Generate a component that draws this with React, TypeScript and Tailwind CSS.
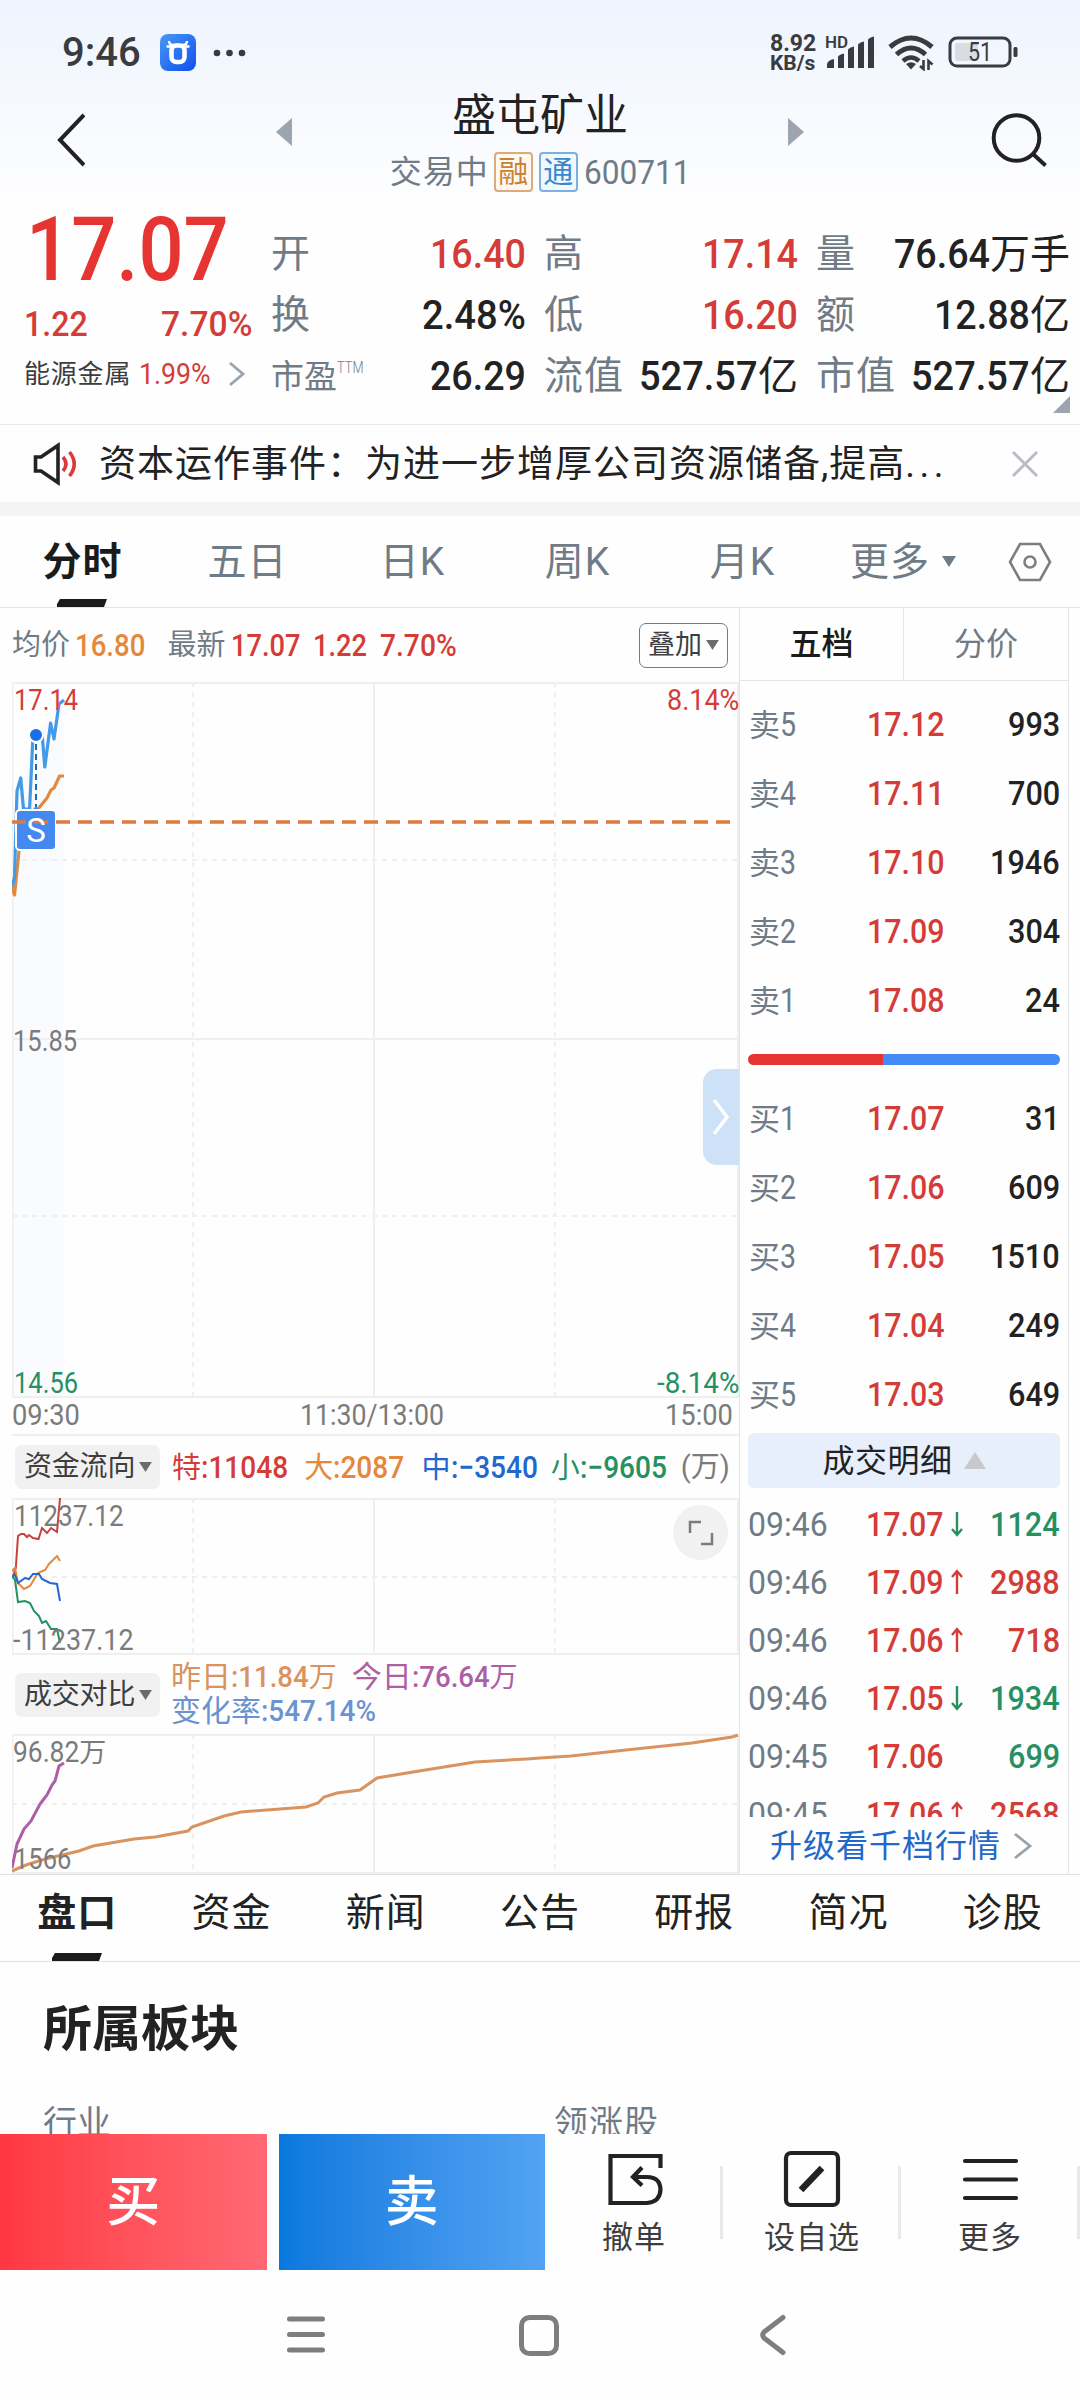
import type { ReactNode } from "react";

const RED = "text-[#d43c38]";
const GREEN = "text-[#259062]";
const SLATE = "text-[#6f7b86]";

const GLYPH_WIDTH: Record<string, number> = { ".": 0.275, ":": 0.25, "%": 0.73, "-": 0.3, "−": 0.56, "/": 0.39, T: 0.6, M: 0.87 };

/* Condensed numerals: squeezes the glyphs and gives back the space they no longer fill. */
function Num({ children, s = 0.9, className = "" }: { children: string; s?: number; className?: string }) {
  const natural = [...children].reduce((sum, c) => sum + (GLYPH_WIDTH[c] ?? 0.563), 0);
  return (
    <span
      className={`inline-block origin-left whitespace-nowrap tracking-normal ${className}`}
      style={{ transform: `scaleX(${s})`, marginRight: `${-natural * (1 - s)}em` }}
    >
      {children}
    </span>
  );
}

function Down({ className = "" }: { className?: string }) {
  return (
    <svg viewBox="0 0 14 11" className={className}>
      <path d="M0 0H14L7 11Z" fill="currentColor" />
    </svg>
  );
}

function StatusBar() {
  return (
    <div className="flex h-[80px] items-start pt-[32px] text-[#3a3b3e]">
      <div className="ml-[62px] mt-[1px] w-[98px] text-[40px] font-medium leading-[40px]">9:46</div>
      <svg width="36" height="37" viewBox="0 0 36 37" className="mt-[2px]">
        <defs>
          <linearGradient id="app" x1="0" y1="0" x2="1" y2="1">
            <stop offset="0" stopColor="#4a97f8" />
            <stop offset="1" stopColor="#0f4fee" />
          </linearGradient>
        </defs>
        <rect width="36" height="37" rx="8" fill="url(#app)" />
        <path d="M9 7q0 4 4 4h10q4 0 4-4" fill="none" stroke="#fff" strokeWidth="2.4" />
        <rect x="11.5" y="11.500" width="13" height="16.500" rx="5" fill="none" stroke="#fff" strokeWidth="4.600" />
        <path d="M6.500 12.500h5M24.500 12.500h5" stroke="#fff" strokeWidth="2.400" />
      </svg>
      <svg width="34" height="8" viewBox="0 0 34 8" className="ml-[17px] mt-[17px]" fill="currentColor">
        <circle cx="4" cy="4" r="3.3" />
        <circle cx="16.500" cy="4" r="3.300" />
        <circle cx="29" cy="4" r="3.300" />
      </svg>
      <div className="ml-[523px] mt-[2px] w-[55px] font-bold">
        <div className="text-[23px] leading-[20px]">8.92</div>
        <div className="text-[21px] leading-[19px]">KB/s</div>
      </div>
      <div className="relative h-[34px] w-[51px] pt-[2px]">
        <div className="text-[17px] font-semibold leading-[17px]">HD</div>
        <svg width="50" height="34" viewBox="0 0 50 34" className="absolute left-[1px] top-[3px]" fill="currentColor">
          <path d="M1 33v-4q1-4 7-5v9z" />
          <path d="M12 33V22q0-2 6-3.500V33zM22 33V15q0-2 6-3.500V33zM32 33V10q0-2 6-3.500V33zM42 33V5q0-2 6-3.500V33z" />
        </svg>
      </div>
      <svg width="48" height="36" viewBox="0 0 48 36" className="ml-[12px] mt-[3px]">
        <g fill="none" stroke="currentColor" strokeWidth="5">
          <path d="M2 12Q23 -6 44 12" />
          <path d="M8.500 19.500Q23 6.500 37.500 19.500" />
          <path d="M15 26Q23 19 31 26" strokeWidth="4.500" />
        </g>
        <path d="M18 29Q23 25.500 28 29L23 34.500Z" fill="currentColor" />
        <path d="M35.500 25v9l-3.500-3M40.500 35v-9l4 3.500" stroke="currentColor" strokeWidth="2.600" fill="none" />
      </svg>
      <div className="relative ml-[12px] mt-[4px] flex h-[32px] w-[71px] items-center">
        <svg width="71" height="32" viewBox="0 0 71 32" className="absolute inset-0">
          <rect x="2" y="2" width="60" height="28" rx="7" fill="none" stroke="currentColor" strokeWidth="3" />
          <path d="M10 7h20v18H10q-3 0-3-3V10q0-3 3-3" fill="#d8dce3" />
          <rect x="65.500" y="11" width="4" height="10" rx="1.500" fill="currentColor" />
        </svg>
        <span className="relative w-[64px] text-center text-[25px] leading-none"><Num s={0.86}>51</Num></span>
      </div>
    </div>
  );
}

function Header() {
  return (
    <div className="flex h-[128px] items-start">
      <svg width="28" height="54" viewBox="0 0 28 54" className="ml-[57px] mt-[33px]">
        <path d="M27 2L3 27L27 52" fill="none" stroke="#222" strokeWidth="4" />
      </svg>
      <svg width="16" height="28" viewBox="0 0 16 28" className="ml-[191px] mt-[38px]">
        <path d="M16 0V28L0 14Z" fill="#9ba4af" />
      </svg>
      <div className="flex w-[496px] flex-col items-center whitespace-nowrap">
        <div className="mt-[13px] text-[44px] leading-[46px] text-[#222]">盛屯矿业</div>
        <div className={`mt-[13px] flex items-center text-[32px] leading-[40px] ${SLATE}`}>
          <span className="tracking-[1px]">交易中</span>
          <span className="ml-[5px] flex h-[40px] w-[39px] items-center justify-center rounded-[4px] border-2 border-[#dcab7c] bg-[#fef8f1] text-[30px] text-[#c98136]">融</span>
          <span className="ml-[6px] flex h-[40px] w-[39px] items-center justify-center rounded-[4px] border-2 border-[#7fb0dd] bg-[#eff7ff] text-[30px] text-[#3c87cc]">通</span>
          <Num s={0.93} className="ml-[6px] text-[34px]">600711</Num>
        </div>
      </div>
      <svg width="16" height="28" viewBox="0 0 16 28" className="mt-[38px]">
        <path d="M0 0V28L16 14Z" fill="#9ba4af" />
      </svg>
      <svg width="60" height="58" viewBox="0 0 60 58" className="ml-[187px] mt-[32px]" fill="none" stroke="#222" strokeWidth="4">
        <circle cx="25.500" cy="26" r="22.800" />
        <path d="M42 42L54.500 53.500" />
      </svg>
    </div>
  );
}

function Quote({ label, value, unit = "", tone = "text-[#222]", small = false, s = 0.94 }: { label: ReactNode; value: string; unit?: string; tone?: string; small?: boolean; s?: number }) {
  return (
    <div className="flex h-[61px] items-center justify-between whitespace-nowrap">
      <span className={small ? `text-[33px] ${SLATE}` : `text-[39px] tracking-[1px] ${SLATE}`}>{label}</span>
      <span className={`text-[40px] font-medium ${tone}`}>
        <Num s={s}>{value}</Num>
        <span className="font-normal">{unit}</span>
      </span>
    </div>
  );
}

function Quotes() {
  return (
    <div className="flex h-[216px] pt-[1px] leading-none">
      <div className={`w-[271px] ${RED}`}>
        <div className="ml-[26px] mt-[-1px] text-[89px] font-medium leading-[84px] text-[#e63432]"><Num s={0.893}>17.07</Num></div>
        <div className="ml-[24px] mt-[13px] flex w-[228px] justify-between text-[35px] font-medium leading-[40px]">
          <Num s={0.92}>1.22</Num>
          <Num s={0.96}>7.70%</Num>
        </div>
        <div className="ml-[24px] mt-[9px] flex items-center text-[26px] leading-[40px]">
          <span className="tracking-[0.800px] text-[#3c3c3e]">能源金属</span>
          <Num s={0.92} className="ml-[8px] text-[29px]">1.99%</Num>
          <svg width="18" height="26" viewBox="0 0 18 26" className="ml-[17px]">
            <path d="M2 2L15 13L2 24" fill="none" stroke="#9aa3ad" strokeWidth="2.800" />
          </svg>
        </div>
      </div>
      <div className="mt-[15px] w-[255px]">
        <Quote label="开" value="16.40" tone={RED} />
        <Quote label="换" value="2.48%" s={0.955} />
        <Quote small label={<>市盈<sup className="relative -top-[15px] align-baseline text-[16px] font-light leading-none"><Num s={0.8}>TTM</Num></sup></>} value="26.29" />
      </div>
      <div className="ml-[18px] mt-[15px] w-[254px]">
        <Quote label="高" value="17.14" tone={RED} />
        <Quote label="低" value="16.20" tone={RED} />
        <Quote label="流值" value="527.57" unit="亿" s={0.95} />
      </div>
      <div className="relative ml-[18px] mt-[15px] w-[254px]">
        <Quote label="量" value="76.64" unit="万手" />
        <Quote label="额" value="12.88" unit="亿" />
        <Quote label="市值" value="527.57" unit="亿" s={0.95} />
        <svg width="17" height="17" viewBox="0 0 17 17" className="absolute right-0 top-[172px]">
          <path d="M17 0V17H0Z" fill="#9ba4af" />
        </svg>
      </div>
    </div>
  );
}

function Notice() {
  return (
    <div className="flex h-[78px] items-center border-t border-[#e9e9e9]">
      <svg width="46" height="44" viewBox="0 0 46 44" className="ml-[33px]" fill="none">
        <path d="M2.500 15H8L25 3.500V40.500L8 29H2.500Z" stroke="#222" strokeWidth="3.600" />
        <path d="M30 15Q36 22 30 29M36.500 10Q46 22 36.500 34" stroke="#d93a3a" strokeWidth="3.600" />
      </svg>
      <span className="ml-[20px] w-[880px] whitespace-nowrap pt-[1px] text-[37px] leading-none tracking-[1px] text-[#222]">
        资本运作事件：为进一步增厚公司资源储备,提高<span className="tracking-[4.500px]">...</span>
      </span>
      <svg width="28" height="28" viewBox="0 0 28 28" className="ml-[32px]">
        <path d="M2 2L26 26M26 2L2 26" stroke="#b7bdc4" strokeWidth="3" />
      </svg>
    </div>
  );
}

function Indicator({ className = "" }: { className?: string }) {
  return (
    <svg width="50" height="8" viewBox="0 0 50 8" className={`absolute bottom-0 ${className}`}>
      <path d="M3 0H50L47 8H0V5Z" fill="#1b1b1b" />
    </svg>
  );
}

function PeriodTabs() {
  return (
    <div className={`flex h-[92px] items-center border-b border-[#e4e5e7] text-[39px] leading-none tracking-[1px] ${SLATE}`}>
      <div className="relative flex h-full w-[165px] items-center justify-center pt-[2px] font-bold text-[#1b1b1b]">
        分时
        <Indicator className="left-[57px]" />
      </div>
      {["五日", "日K", "周K", "月K"].map((t) => (
        <div key={t} className="w-[165px] pt-[2px] text-center">{t}</div>
      ))}
      <div className="ml-[25px] w-[92px] pt-[2px]">更多</div>
      <Down className="h-[11px] w-[14px]" />
      <svg width="44" height="40" viewBox="0 0 44 40" className="ml-[52px]" fill="none" stroke="#7e7e7e" strokeWidth="2.600">
        <path d="M12 2H32L42 20L32 38H12L2 20Z" />
        <circle cx="22" cy="20" r="5.500" />
      </svg>
    </div>
  );
}

function Grid({ h, lines }: { h: number; lines: number[] }) {
  return (
    <g stroke="#efefef" strokeWidth="2" fill="none">
      <path d={`M0 1H727M0 ${h - 1}H727M.5 0V${h}M362 0V${h}M726 0V${h}`} />
      <path d={`M181 0V${h}M543 0V${h}`} strokeDasharray="5 5" />
      {lines.map((y) => (
        <path key={y} d={`M0 ${y}H727`} strokeDasharray="5 5" />
      ))}
    </g>
  );
}

function PriceChart() {
  return (
    <div className="relative h-[716px] text-[29px] leading-none">
      <svg width="727" height="716" viewBox="0 0 727 716" className="block">
        <path d="M0 205L5 110L20 60L52 20V715H0Z" fill="#f9fbff" />
        <Grid h={716} lines={[178, 534]} />
        <path d="M0 357H727" stroke="#efefef" strokeWidth="2" />
        <g fill="none" strokeWidth="3.200" strokeLinejoin="round">
          <path d="M0 205L2.500 213L7 169L26 127L35 116L39 108L42 106L47.600 94H52" stroke="#e5883c" />
          <path d="M0 205L2.500 195L5 109L8.700 96L11.500 127H17.600L20.700 59L24 54L30 51L32.800 85L38.600 41L42 57L47 22L52 18" stroke="#439ae6" />
        </g>
        <path d="M24 62V128" stroke="#1f6aa8" strokeWidth="2" strokeDasharray="6 4" />
        <circle cx="24" cy="53" r="7" fill="#1a6ee8" stroke="#fff" strokeWidth="2" />
        <path d="M18 130L24 124L30 130Z" fill="#4389f0" />
        <rect x="4" y="128" width="40" height="40" rx="4" fill="#4389f0" stroke="#fff" strokeWidth="2" />
        <path d="M0 140H720" stroke="#dd7a3e" strokeWidth="3.600" strokeDasharray="14 8" />
        <text x="24" y="160" fontSize="33" fill="#fff" textAnchor="middle" fontFamily="Roboto, sans-serif">S</text>
      </svg>
      <Num s={0.88} className={`absolute left-[2px] top-[4px] ${RED}`}>17.14</Num>
      <span className={`absolute right-0 top-[4px] ${RED}`}><Num s={0.93}>8.14%</Num></span>
      <Num s={0.88} className="absolute left-[1px] top-[345px] text-[#7b7b7b]">15.85</Num>
      <Num s={0.88} className={`absolute bottom-0 left-[2px] ${GREEN}`}>14.56</Num>
      <span className={`absolute bottom-0 right-0 ${GREEN}`}><Num s={0.96}>-8.14%</Num></span>
      <div className="absolute right-0 top-[387px] flex h-[96px] w-[36px] items-center justify-center rounded-l-[14px] bg-[#cde2f6]">
        <svg width="18" height="38" viewBox="0 0 18 38">
          <path d="M2 2L15 19L2 36" fill="none" stroke="#fff" strokeWidth="3.500" />
        </svg>
      </div>
    </div>
  );
}

function Picker({ children }: { children: string }) {
  return (
    <div className="flex h-[44px] w-[145px] shrink-0 items-center rounded-[7px] bg-[#f1f1f2] pl-[9px] text-[28px] font-normal tracking-[-0.200px] text-[#3e3e40]">
      {children}
      <Down className="ml-[4px] h-[10px] w-[13px] text-[#6b6b6b]" />
    </div>
  );
}

function Flow({ name, value, className }: { name: string; value: string; className: string }) {
  return (
    <span className={className}>
      <span className="text-[29px] font-normal">{name}</span>
      <Num s={0.905}>{value}</Num>
    </span>
  );
}

function LeftPanel() {
  return (
    <div className="w-[727px] shrink-0 leading-none">
      <div className={`flex h-[74px] items-center text-[29px] ${SLATE}`}>
        <span>均价</span>
        <Num s={0.89} className="ml-[5px] text-[31px] font-medium text-[#e5883c]">16.80</Num>
        <span className="ml-[22px]">最新</span>
        <div className={`ml-[5px] flex gap-[13px] text-[31px] font-medium ${RED}`}>
          <Num s={0.88}>17.07</Num>
          <Num s={0.88}>1.22</Num>
          <Num s={0.91}>7.70%</Num>
        </div>
        <div className="ml-auto mr-[11px] flex h-[45px] w-[89px] items-center rounded-[7px] border border-[#6f7b86] pl-[8px] text-[27px] text-[#3e3e40]">
          叠加
          <Down className="ml-[4px] h-[10px] w-[13px] text-[#6b6b6b]" />
        </div>
      </div>
      <PriceChart />
      <div className="flex h-[38px] items-center justify-between border-b-2 border-[#efefef] pb-[2px] pr-[6px] text-[29px] text-[#7b7b7b]">
        <Num s={0.94}>09:30</Num>
        <Num s={0.92} className="ml-[-2px]">11:30/13:00</Num>
        <Num s={0.94}>15:00</Num>
      </div>
      <div className="flex h-[62px] items-center whitespace-nowrap pl-[3px] text-[31px] font-medium">
        <Picker>资金流向</Picker>
        <Flow name="特" value=":11048" className={`ml-[12px] ${RED}`} />
        <Flow name="大" value=":2087" className="ml-[16px] text-[#e5883c]" />
        <Flow name="中" value=":−3540" className="ml-[17px] text-[#2068d0]" />
        <Flow name="小" value=":−9605" className={`ml-[13px] ${GREEN}`} />
        <span className="ml-[14px] text-[29px] font-normal text-[#7b7b7b]">(万)</span>
      </div>
      <div className="relative h-[157px] text-[29px] text-[#7b7b7b]">
        <svg width="727" height="157" viewBox="0 0 727 157" className="block">
          <Grid h={157} lines={[79]} />
          <g fill="none" strokeWidth="2">
            <path d="M1 78L3.800 70L6 38L9 36H12L15 39L17 37L21 40L26.500 41L30 30L35 35L39 30L45 34L48 0" stroke="#c9403e" />
            <path d="M0 73L3 70L6 85L12 91L18 88L26 75L33 72L37 66L45 58L48 63" stroke="#e5883c" />
            <path d="M0 79L3 77L6 85L13 80L17 81L21 76L27 76L30 81L38 85L45 86L48 103" stroke="#2068d0" />
            <path d="M0 78L3 82L6 104L13 103L18 105L22 113L27 118L30 125L34 123L39 131H45L48 145" stroke="#259062" />
          </g>
        </svg>
        <Num s={0.9} className="absolute left-[2px] top-[4px]">11237.12</Num>
        <Num s={0.93} className="absolute bottom-0 left-[1px]">-11237.12</Num>
        <div className="absolute right-[11px] top-[7px] flex h-[55px] w-[55px] items-center justify-center rounded-full bg-[#f1f1f1]">
          <svg width="26" height="26" viewBox="0 0 26 26" fill="none" stroke="#7b7b7b" strokeWidth="2.500">
            <path d="M2 13V2H13M24 13V24H13" />
          </svg>
        </div>
      </div>
      <div className="flex h-[79px] items-center pl-[3px]">
        <Picker>成交对比</Picker>
        <div className="-mt-[2px] ml-[11px] text-[30px] font-medium leading-[33px] text-[#d8935f]">
          <div className="flex gap-[15px]">
            <span><span className="font-normal">昨日</span><Num s={0.92}>:11.84</Num><span className="text-[28px] font-normal">万</span></span>
            <span className="text-[#ad5fa5]"><span className="font-normal">今日</span><Num s={0.92}>:76.64</Num><span className="text-[28px] font-normal">万</span></span>
          </div>
          <div className="text-[#6b93cf]"><span className="font-normal">变化率</span><Num s={0.93}>:547.14%</Num></div>
        </div>
      </div>
      <div className="relative h-[140px] text-[29px] text-[#7b7b7b]">
        <svg width="727" height="140" viewBox="0 0 727 140" className="block">
          <Grid h={140} lines={[70]} />
          <g fill="none" strokeWidth="3">
            <path d="M0 137L14 131L33 125L67 117L81 112L122 105L143 103L176 97L180 93L212 82L229 78L294 73L306 69L312 63L325 59L348 56L365 44L401 38L463 28L515 25L528 24L559 22L614 16L680 9L720 3L726 1" stroke="#d8935f" />
            <path d="M0 134L5 110L12 95L19 87L28 70L35 61L40 51L43 47L47 32L52 29" stroke="#ad5fa5" />
          </g>
        </svg>
        <span className="absolute left-[1px] top-[4px] whitespace-nowrap"><Num s={0.91}>96.82</Num><span className="text-[27px]">万</span></span>
        <Num s={0.88} className="absolute bottom-0 left-[2px]">1566</Num>
      </div>
    </div>
  );
}

const asks = [["卖5", "17.12", "993"], ["卖4", "17.11", "700"], ["卖3", "17.10", "1946"], ["卖2", "17.09", "304"], ["卖1", "17.08", "24"]];
const bids = [["买1", "17.07", "31"], ["买2", "17.06", "609"], ["买3", "17.05", "1510"], ["买4", "17.04", "249"], ["买5", "17.03", "649"]];
const trades: [string, string, number, string, boolean][] = [
  ["09:46", "17.07", -1, "1124", false],
  ["09:46", "17.09", 1, "2988", true],
  ["09:46", "17.06", 1, "718", true],
  ["09:46", "17.05", -1, "1934", false],
  ["09:45", "17.06", 0, "699", false],
  ["09:45", "17.06", 1, "2568", true],
];

function Level({ row }: { row: string[] }) {
  return (
    <div className="flex h-[69px] items-center text-[34px] font-medium">
      <span className={`w-[118px] font-normal ${SLATE}`}><span className="text-[31px]">{row[0][0]}</span><Num s={0.84}>{row[0][1]}</Num></span>
      <Num s={0.895} className={RED}>{row[1]}</Num>
      <span className="ml-auto text-[#222]"><Num s={0.9}>{row[2]}</Num></span>
    </div>
  );
}

function RightPanel() {
  return (
    <div className="flex h-[1266px] w-[330px] flex-col border-x border-[#e4e5e7] leading-none">
      <div className="flex h-[73px] shrink-0 items-center border-b border-[#e4e5e7] text-center text-[32px]">
        <div className="flex h-full w-[164px] items-center justify-center border-r border-[#e4e5e7] font-medium text-[#1b1b1b]">五档</div>
        <div className={`flex-1 ${SLATE}`}>分价</div>
      </div>
      <div className="flex min-h-0 flex-1 flex-col px-[8px]">
        <div className="mt-[8px] pl-[1px]">{asks.map((r) => <Level key={r[0]} row={r} />)}</div>
        <div className="mt-[20px] flex h-[11px] shrink-0 overflow-hidden rounded-full">
          <div className="w-[135px] bg-[#e63432]" />
          <div className="flex-1 bg-[#458bf8]" />
        </div>
        <div className="mt-[18px] pl-[1px]">{bids.map((r) => <Level key={r[0]} row={r} />)}</div>
        <div className="mt-[5px] flex h-[55px] shrink-0 items-center justify-center rounded-[6px] bg-[#e6effb] text-[32px] tracking-[0.5px] text-[#222]">
          成交明细
          <svg width="22" height="17" viewBox="0 0 22 17" className="ml-[11px]"><path d="M11 0L22 17H0Z" fill="#c8c9cb" /></svg>
        </div>
        <div className="mt-[7px] h-[322px] shrink-0 overflow-hidden">
          {trades.map(([time, price, dir, vol, up], i) => (
            <div key={i} className="flex h-[58px] items-center text-[34px] font-medium">
              <span className={`w-[118px] font-normal ${SLATE}`}><Num s={0.94}>{time}</Num></span>
              <Num s={0.895} className={RED}>{price}</Num>
              {dir !== 0 && (
                <svg width="12" height="26" viewBox="0 0 12 26" className={`ml-[7px] ${dir > 0 ? RED : GREEN}`} fill="none" stroke="currentColor" strokeWidth="2.400">
                  <path d={dir > 0 ? "M6 25V2M1 8L6 2L11 8" : "M6 1V24M1 18L6 24L11 18"} />
                </svg>
              )}
              <span className={`ml-auto ${up ? RED : GREEN}`}><Num s={0.9}>{vol}</Num></span>
            </div>
          ))}
        </div>
        <div className="mt-[9px] flex items-center pl-[22px] text-[32px] leading-[40px] tracking-[1px] text-[#2168cc]">
          升级看千档行情
          <svg width="20" height="28" viewBox="0 0 20 28" className="ml-[12px]">
            <path d="M2 2L17 14L2 26" fill="none" stroke="#9aa3ad" strokeWidth="2.800" />
          </svg>
        </div>
      </div>
    </div>
  );
}

function Action({ label, children }: { label: string; children: ReactNode }) {
  return (
    <div className="flex w-[178px] shrink-0 flex-col items-center text-[31px] leading-none text-[#3e3e40]">
      <svg width="60" height="60" viewBox="0 0 60 60" className="mt-[15px]" fill="none" stroke="#222" strokeWidth="4.200">{children}</svg>
      <span className="mt-[13px] font-normal tracking-[1px]">{label}</span>
    </div>
  );
}

export default function App() {
  return (
    <div className="h-[2400px] w-[1080px] overflow-hidden bg-[#fefefe] font-['Roboto','Noto_Sans_CJK_SC',sans-serif]">
      <div className="bg-linear-to-b from-[#eef4fe] to-[#fefefe]">
        <StatusBar />
        <Header />
      </div>
      <Quotes />
      <Notice />
      <div className="h-[14px] bg-[#f4f4f4]" />
      <PeriodTabs />
      <div className="flex h-[1266px] pl-[12px]">
        <LeftPanel />
        <RightPanel />
      </div>
      <div className="grid h-[88px] grid-cols-7 border-b border-t border-[#e0e0e0] text-[39px] leading-none text-[#222]">
        {["盘口", "资金", "新闻", "公告", "研报", "简况", "诊股"].map((t, i) => (
          <div key={t} className={`relative pt-[19px] text-center tracking-[1px] ${i === 0 ? "font-bold" : ""}`}>
            {t}
            {i === 0 && <Indicator className="left-[52px]" />}
          </div>
        ))}
      </div>
      <div className="h-[172px] overflow-hidden pl-[43px] leading-none">
        <div className="mt-[43px] text-[49px] font-bold text-[#222]">所属板块</div>
        <div className={`mt-[52px] flex text-[34px] ${SLATE}`}>
          <span className="w-[511px]">行业</span>
          <span className="tracking-[1px]">领涨股</span>
        </div>
      </div>
      <div className="flex h-[136px] text-[54px] font-medium text-white">
        <div className="flex w-[267px] items-center justify-center bg-linear-to-r from-[#ff3742] to-[#ff6873]">买</div>
        <div className="ml-[12px] flex w-[267px] items-center justify-center bg-linear-to-r from-[#0678de] to-[#52a3f2]">卖</div>
        <Action label="撤单">
          <path d="M56.500 19V7H6.500V54H43Q56 53 56.500 40.500Q56 28 43 28H29M38 18.500L29 28L38 36.500" />
        </Action>
        <div className="-ml-[3px] mt-[32px] h-[73px] w-[3px] shrink-0 bg-[#e8eaea]" />
        <Action label="设自选">
          <rect x="4" y="4" width="52" height="52" rx="5" />
          <path d="M19 41L40 19" strokeWidth="6.500" />
        </Action>
        <div className="-ml-[3px] mt-[32px] h-[73px] w-[3px] shrink-0 bg-[#e8eaea]" />
        <Action label="更多">
          <path d="M5 12H56M5 30.500H56M5 49H56" strokeLinecap="round" />
        </Action>
        <div className="-ml-[2px] mt-[32px] h-[73px] w-[3px] shrink-0 bg-[#e8eaea]" />
      </div>
      <div className="flex h-[130px] items-center">
        <svg width="40" height="42" viewBox="0 0 40 42" className="ml-[286px]" stroke="#7e7e7e" strokeWidth="5" strokeLinecap="round">
          <path d="M3.500 5H36.500M3.500 20.500H36.500M3.500 36H36.500" />
        </svg>
        <svg width="42" height="42" viewBox="0 0 42 42" className="ml-[192px]" fill="none" stroke="#7e7e7e" strokeWidth="5">
          <rect x="3.500" y="3.500" width="35" height="36" rx="8" />
        </svg>
        <svg width="28" height="42" viewBox="0 0 28 42" className="ml-[199px]" fill="none" stroke="#7e7e7e" strokeWidth="5" strokeLinecap="round">
          <path d="M24 3.500L5 18Q2.500 21 5 24L24 38.500" />
        </svg>
      </div>
    </div>
  );
}
